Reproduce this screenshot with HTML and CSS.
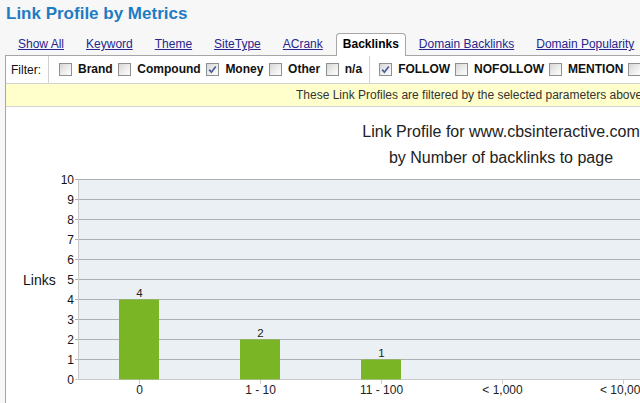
FILE: index.html
```html
<!DOCTYPE html>
<html>
<head>
<meta charset="utf-8">
<title>Link Profile by Metrics</title>
<link rel="stylesheet" href="styles.css">
</head>
<body>
<h1 class="title">Link Profile by Metrics</h1>
<ul class="tabs">
  <li class="tab"><a href="#">Show All</a></li>
  <li class="tab"><a href="#">Keyword</a></li>
  <li class="tab"><a href="#">Theme</a></li>
  <li class="tab"><a href="#">SiteType</a></li>
  <li class="tab"><a href="#">ACrank</a></li>
  <li class="tab active">Backlinks</li>
  <li class="tab"><a href="#">Domain Backlinks</a></li>
  <li class="tab"><a href="#">Domain Popularity</a></li>
</ul>
<div class="panel">
  <div class="filters">
    <div class="cell label">Filter:</div>
    <div class="cell group first">
      <label class="opt"><span class="cb"></span>Brand</label>
      <label class="opt"><span class="cb"></span>Compound</label>
      <label class="opt"><span class="cb"><svg class="check" viewBox="0 0 11 11"><path d="M2.2 5.6 L4.4 8.2 L8.8 2.4"/></svg></span>Money</label>
      <label class="opt"><span class="cb"></span>Other</label>
      <label class="opt"><span class="cb"></span>n/a</label>
    </div>
    <div class="cell group second">
      <label class="opt"><span class="cb"><svg class="check" viewBox="0 0 11 11"><path d="M2.2 5.6 L4.4 8.2 L8.8 2.4"/></svg></span>FOLLOW</label>
      <label class="opt"><span class="cb"></span>NOFOLLOW</label>
      <label class="opt"><span class="cb"></span>MENTION</label>
      <label class="opt"><span class="cb"></span></label>
    </div>
  </div>
  <div class="notice">These Link Profiles are filtered by the selected parameters above</div>
  <div class="chart">
    <svg class="chart-svg" width="1094" height="296" viewBox="0 0 1094 296">
      <g transform="translate(-6,-107)">
        <text class="ctitle" x="501" y="137">Link Profile for www.cbsinteractive.com</text>
        <text class="ctitle" x="501" y="163">by Number of backlinks to page</text>
        <rect x="78" y="179.5" width="1100" height="200" fill="#ebf0f5"/>
        <g class="grid">
          <line x1="75" y1="179.5" x2="1200" y2="179.5"/>
          <line x1="75" y1="199.5" x2="1200" y2="199.5"/>
          <line x1="75" y1="219.5" x2="1200" y2="219.5"/>
          <line x1="75" y1="239.5" x2="1200" y2="239.5"/>
          <line x1="75" y1="259.5" x2="1200" y2="259.5"/>
          <line x1="75" y1="279.5" x2="1200" y2="279.5"/>
          <line x1="75" y1="299.5" x2="1200" y2="299.5"/>
          <line x1="75" y1="319.5" x2="1200" y2="319.5"/>
          <line x1="75" y1="339.5" x2="1200" y2="339.5"/>
          <line x1="75" y1="359.5" x2="1200" y2="359.5"/>
        </g>
        <g class="axis">
          <line x1="78.5" y1="179.5" x2="78.5" y2="379.5"/>
          <line x1="75" y1="379.5" x2="1200" y2="379.5"/>
          <line x1="139.5" y1="379.5" x2="139.5" y2="384"/>
          <line x1="260.5" y1="379.5" x2="260.5" y2="384"/>
          <line x1="381.5" y1="379.5" x2="381.5" y2="384"/>
          <line x1="502.5" y1="379.5" x2="502.5" y2="384"/>
          <line x1="623.5" y1="379.5" x2="623.5" y2="384"/>
        </g>
        <g class="ylabels">
          <text x="74" y="184">10</text>
          <text x="74" y="204">9</text>
          <text x="74" y="224">8</text>
          <text x="74" y="244">7</text>
          <text x="74" y="264">6</text>
          <text x="74" y="284">5</text>
          <text x="74" y="304">4</text>
          <text x="74" y="324">3</text>
          <text x="74" y="344">2</text>
          <text x="74" y="364">1</text>
          <text x="74" y="384">0</text>
        </g>
        <text class="ytitle" x="23" y="285">Links</text>
        <g class="bars">
          <rect x="119" y="299.5" width="40" height="80"/>
          <rect x="240" y="339.5" width="40" height="40"/>
          <rect x="361" y="359.5" width="40" height="20"/>
        </g>
        <g class="vlabels">
          <text x="139.5" y="296.5">4</text>
          <text x="260.5" y="336.5">2</text>
          <text x="381.5" y="356.5">1</text>
        </g>
        <g class="xlabels">
          <text x="139.5" y="393.5">0</text>
          <text x="260.5" y="393.5">1 - 10</text>
          <text x="381.5" y="393.5">11 - 100</text>
          <text x="502.5" y="393.5">&lt; 1,000</text>
          <text x="623.5" y="393.5">&lt; 10,000</text>
        </g>
      </g>
    </svg>
  </div>
</div>
</body>
</html>
```
FILE: styles.css
```css
html, body {
  margin: 0;
  padding: 0;
}
body {
  background: #f7f7f7;
  font-family: "Liberation Sans", Arial, sans-serif;
  font-size: 12px;
  color: #000;
  width: 640px;
  height: 403px;
  overflow: hidden;
}
.title {
  margin: 0;
  padding: 4px 6px 0;
  font-size: 17px;
  line-height: 19px;
  font-weight: bold;
  color: #1f7cc3;
  white-space: nowrap;
}
.tabs {
  list-style: none;
  margin: 10px 0 -1px 0;
  padding: 0 0 0 11px;
  display: flex;
  gap: 8px;
  white-space: nowrap;
  position: relative;
  z-index: 1;
}
.tab {
  border: 1px solid transparent;
  border-bottom: 0;
  padding: 3px 6px 4px;
  line-height: 15px;
  font-size: 12px;
}
.tab a {
  color: #26268f;
  text-decoration: underline;
}
.tab.active {
  background: #fff;
  border-color: #a6a6a6;
  border-radius: 4px 4px 0 0;
  font-weight: bold;
  color: #000;
  margin-left: -2px;
  margin-right: -2px;
}
.panel {
  margin-left: 5px;
  width: 1100px;
  border-left: 1px solid #a6a6a6;
  border-top: 1px solid #a6a6a6;
  background: #fff;
}
.filters {
  display: flex;
  height: 27px;
  background: #fff;
  border-bottom: 1px solid #d2d2d2;
  white-space: nowrap;
}
.cell {
  display: flex;
  align-items: center;
}
.cell.label {
  padding: 0 7px 0 5px;
  border-right: 1px solid #d2d2d2;
  color: #111;
}
.cell.group {
  padding: 0 8px 0 10px;
  gap: 6px;
}
.cell.group.first {
  border-right: 1px solid #d2d2d2;
  padding-right: 7px;
  gap: 5.7px;
}
.cell.group.second {
  padding-left: 9px;
  gap: 5px;
}
.opt {
  font-weight: bold;
  color: #111;
  line-height: 15px;
}
.cb {
  display: inline-block;
  box-sizing: border-box;
  width: 13px;
  height: 13px;
  margin-right: 6px;
  vertical-align: -3px;
  border: 1px solid #8e8f8f;
  background: linear-gradient(135deg, #d6d6d6 0%, #f0f0f0 60%, #fdfdfd 100%);
}
.check {
  display: block;
  width: 11px;
  height: 11px;
  fill: none;
  stroke: #4b5c9e;
  stroke-width: 1.7;
}
.notice {
  height: 22px;
  line-height: 22px;
  padding-left: 290px;
  background: #ffffcc;
  border-bottom: 1px solid #d2d2d2;
  color: #333;
  white-space: nowrap;
}
.chart {
  background: #fff;
  height: 296px;
  overflow: hidden;
}
.chart-svg {
  display: block;
  font-family: "Liberation Sans", Arial, sans-serif;
}
.ctitle {
  font-size: 16px;
  fill: #222;
  text-anchor: middle;
}
.grid line {
  stroke: #acafb3;
  stroke-width: 1;
}
.axis line {
  stroke: #c9cacc;
  stroke-width: 1;
}
.ylabels text {
  font-size: 12px;
  fill: #111;
  text-anchor: end;
}
.ytitle {
  font-size: 14px;
  fill: #111;
}
.bars rect {
  fill: #7ab526;
}
.vlabels text {
  font-size: 11.5px;
  fill: #222;
  text-anchor: middle;
}
.xlabels text {
  font-size: 12px;
  fill: #222;
  text-anchor: middle;
}
```
